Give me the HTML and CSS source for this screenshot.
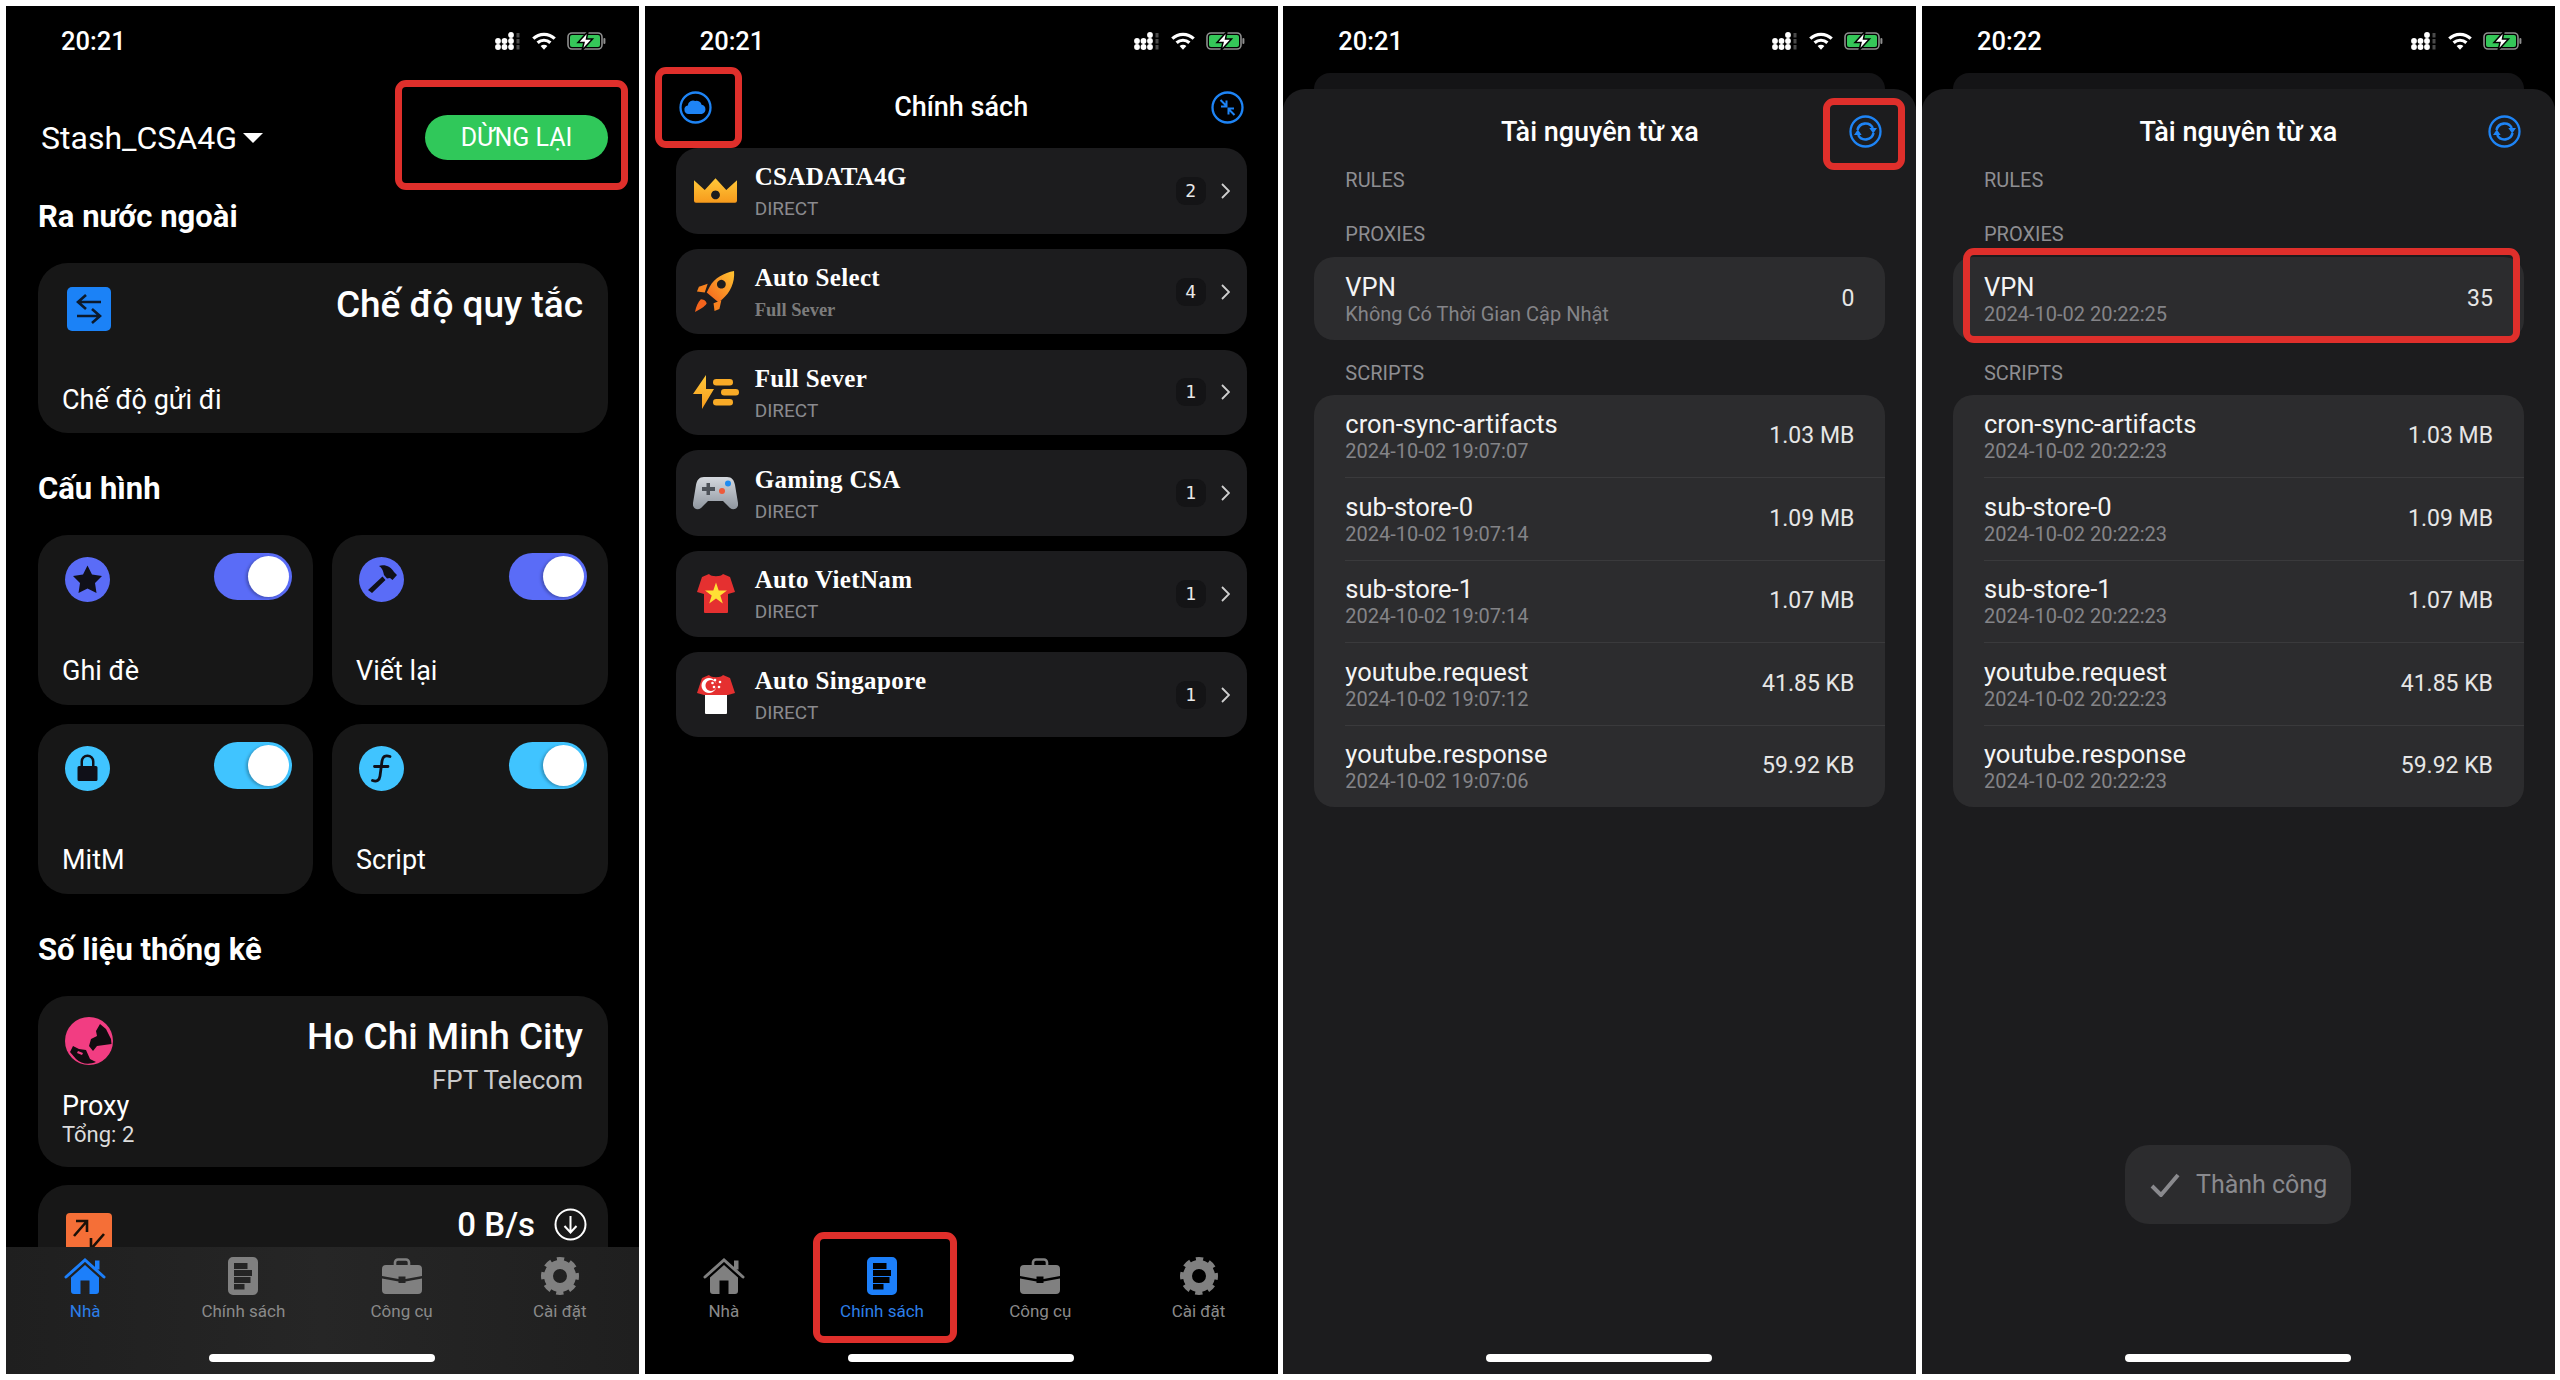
FILE: index.html
```html
<!DOCTYPE html>
<html lang="vi">
<head>
<meta charset="utf-8">
<title>Stash</title>
<link rel="stylesheet" href="styles.css">
</head>
<body>
<svg class="defs" width="0" height="0" aria-hidden="true">
  <defs>
    <linearGradient id="gold" x1="0" y1="0" x2="0" y2="1"><stop offset="0" stop-color="#ffc93a"/><stop offset="1" stop-color="#f79a1c"/></linearGradient>
    <linearGradient id="fire" x1="1" y1="0" x2="0" y2="1"><stop offset="0" stop-color="#ffc531"/><stop offset="1" stop-color="#f4601c"/></linearGradient>
    <linearGradient id="silver" x1="0" y1="0" x2="0" y2="1"><stop offset="0" stop-color="#d4d8de"/><stop offset="1" stop-color="#8f969f"/></linearGradient>
    <symbol id="i-signal" viewBox="0 0 25 18">
      <g fill="#fff"><circle cx="3" cy="9" r="2.900"/><circle cx="3" cy="15" r="2.900"/><circle cx="9.500" cy="9" r="2.900"/><circle cx="9.500" cy="15" r="2.900"/><circle cx="16" cy="3" r="2.900"/><circle cx="16" cy="9" r="2.900"/><circle cx="16" cy="15" r="2.900"/></g>
      <g fill="#4a4a4a"><rect x="21.500" y="1" width="3" height="4.500"/><rect x="21.500" y="7" width="3" height="4.500"/><rect x="21.500" y="13" width="3" height="4.500"/></g>
    </symbol>
    <symbol id="i-wifi" viewBox="0 0 24 18">
      <g fill="none" stroke="#fff" stroke-width="3.200"><path d="M1.300 6.600C7.300.9 16.700.9 22.700 6.600"/><path d="M5.600 10.800C9.300 7.400 14.700 7.400 18.400 10.800"/></g>
      <path fill="#fff" d="M8.600 14C10.500 12.400 13.500 12.400 15.400 14L12 17.800z"/>
    </symbol>
    <symbol id="i-battery" viewBox="0 0 39 18">
      <rect x="1" y="1" width="34" height="16" rx="4" fill="none" stroke="#8e8e8e" stroke-width="1.600"/>
      <rect x="3" y="3" width="30" height="12" rx="2" fill="#35c759"/>
      <rect x="36.400" y="6" width="2" height="6" rx="1" fill="#8e8e8e"/>
      <path d="M21 -0.500L11 10.500H17L15 18.500L25.500 7H19.500z" fill="#fff" stroke="#000" stroke-width="1.500"/>
    </symbol>
    <symbol id="i-home" viewBox="0 0 42 37">
      <path d="M2 19.500L21 2.500L40 19.500" fill="none" stroke="currentColor" stroke-width="3" stroke-linecap="round"/>
      <rect x="31" y="3" width="4.500" height="9" fill="currentColor"/>
      <path fill-rule="evenodd" fill="currentColor" d="M7 20L21 7.500L35 20V33.500a3 3 0 0 1-3 3H10a3 3 0 0 1-3-3zM16.500 23V36.500H25.500V23z"/>
    </symbol>
    <symbol id="i-policy" viewBox="0 0 30 38">
      <path fill-rule="evenodd" fill="currentColor" d="M5 0H25a5 5 0 0 1 5 5V33a5 5 0 0 1-5 5H5a5 5 0 0 1-5-5V5a5 5 0 0 1 5-5zM6 6V12H19.500V6zM6 13V19H24V13zM6 20V26H22.500V20zM6 27V32.500H16.500V27z"/>
    </symbol>
    <symbol id="i-tools" viewBox="0 0 40 36">
      <path fill="none" stroke="currentColor" stroke-width="2.600" d="M13 8V4.500a3 3 0 0 1 3-3H24a3 3 0 0 1 3 3V8"/>
      <path fill="currentColor" d="M4 7H36a4 4 0 0 1 4 4V18L23.500 21V18.500H16.500V21L0 18V11a4 4 0 0 1 4-4z"/>
      <path fill="currentColor" d="M0 20.500L16.500 23.500V25H23.500V23.500L40 20.500V32a4 4 0 0 1-4 4H4a4 4 0 0 1-4-4z"/>
    </symbol>
    <symbol id="i-gear" viewBox="0 0 38 38">
      <circle cx="19" cy="19" r="11.500" fill="none" stroke="currentColor" stroke-width="9"/>
      <circle cx="19" cy="19" r="16" fill="none" stroke="currentColor" stroke-width="6" stroke-dasharray="6.900 5.666" stroke-dashoffset="3.450"/>
    </symbol>
    <symbol id="i-cloud" viewBox="0 0 33 33">
      <circle cx="16.500" cy="16.500" r="15" fill="none" stroke="#1e84f5" stroke-width="2.300"/>
      <path fill="#1e84f5" d="M9.500 23a4.300 4.300 0 0 1-.7-8.500 5.300 5.300 0 0 1 7.500-4.500 5.100 5.100 0 0 1 6.300 3.800 4.700 4.700 0 0 1 .2 9.200z"/>
    </symbol>
    <symbol id="i-collapse" viewBox="0 0 33 33">
      <circle cx="16.500" cy="16.500" r="15" fill="none" stroke="#1e84f5" stroke-width="2.300"/>
      <g fill="none" stroke="#1e84f5" stroke-width="2"><path d="M9.500 9L15.500 15M15.500 9.500V15.500H10"/><path d="M23.500 24L17.500 18M17.500 23.500V17.500H23"/></g>
    </symbol>
    <symbol id="i-refresh" viewBox="0 0 33 33">
      <circle cx="16.500" cy="16.500" r="15" fill="none" stroke="#1e84f5" stroke-width="2.300"/>
      <g fill="none" stroke="#1e84f5" stroke-width="2.600"><path d="M8.500 15A8.200 8.200 0 0 1 23.800 13"/><path d="M24.500 18A8.200 8.200 0 0 1 9.200 20"/></g>
      <path fill="#1e84f5" d="M20.300 13H28L24.200 18.500zM5 20H12.700L8.800 14.500z"/>
    </symbol>
    <symbol id="i-crown" viewBox="0 0 44 25">
      <path fill="url(#gold)" fill-rule="evenodd" d="M0 2L11 12L22 0L33 12L44 2V23a2 2 0 0 1-2 2H2a2 2 0 0 1-2-2zM22 12.500a4.500 4.500 0 1 0 .01 0z"/>
    </symbol>
    <symbol id="i-rocket" viewBox="0 0 42 43">
      <path fill="url(#fire)" fill-rule="evenodd" d="M40 0C41 12 36 22 28 29L24 32L12 22L15 16C20 7 30 2 40 0zM27 9a4.500 4.500 0 1 0 .01 0z"/>
      <path fill="#f7821f" d="M13 13L4 16L2 21L10 22zM27 30L25 39L20 41L19 33z"/>
      <path fill="#f4641d" d="M6 29C8 29 11 30 12 33C10 37 5 39 0 42C1 37 3 32 6 29z"/>
    </symbol>
    <symbol id="i-bolt" viewBox="0 0 46 34">
      <path fill="url(#gold)" d="M13 0V14H21L9 34V19H0z"/>
      <g fill="#f9ab27"><rect x="20" y="4" width="20" height="6.500" rx="3.250"/><rect x="28" y="14" width="18" height="6.500" rx="3.250"/><rect x="20" y="24" width="20" height="6.500" rx="3.250"/></g>
    </symbol>
    <symbol id="i-pad" viewBox="0 0 45 33">
      <path fill="url(#silver)" d="M11 0H34C39 0 41 3 42 8L45 26C46 31 41 34 37 31L30 24H15L8 31C4 34 -1 31 0 26L3 8C4 3 6 0 11 0z"/>
      <path fill="#4c5158" d="M10 9H14.500V5H18V9H23V13H18V17H14.500V13H10z" transform="translate(-1 1)"/>
      <circle cx="35" cy="6.500" r="3" fill="#1f8bf0"/><circle cx="29" cy="14" r="3" fill="#ee5a3a"/>
    </symbol>
    <symbol id="i-vn" viewBox="0 0 38 39">
      <path fill="#e53030" d="M12 0C14 3 24 3 26 0L33 3L38 18L31 20V38a1 1 0 0 1-1 1H8a1 1 0 0 1-1-1V20L0 18L5 3z"/>
      <path fill="#ffdf35" d="M19 8.500L21.700 16.500H30L23.300 21.500L25.800 29.500L19 24.600L12.200 29.500L14.700 21.500L8 16.500H16.300z"/>
    </symbol>
    <symbol id="i-sg" viewBox="0 0 38 39">
      <path fill="#fff" d="M8 17H30V38a1 1 0 0 1-1 1H9a1 1 0 0 1-1-1z"/>
      <path fill="#e53030" d="M12 0C14 3 24 3 26 0L33 3L38 18L31 20H7L0 18L5 3z"/>
      <path fill="#fff" fill-rule="evenodd" d="M12 3a7.500 7.500 0 1 0 .01 0zM14 5a5.500 5.500 0 1 1-.01 0z"/>
      <g fill="#fff"><circle cx="18" cy="5" r="1.300"/><circle cx="23" cy="7" r="1.300"/><circle cx="22" cy="12" r="1.300"/><circle cx="17" cy="12" r="1.300"/><circle cx="15.500" cy="8" r="1.300"/></g>
    </symbol>
  </defs>
</svg>

<main class="screens">

  <section class="phone">
    <header class="status">
      <span class="time">20:21</span>
      <div class="status-icons">
        <svg class="s-signal"><use href="#i-signal"/></svg>
        <svg class="s-wifi"><use href="#i-wifi"/></svg>
        <svg class="s-battery"><use href="#i-battery"/></svg>
      </div>
    </header>
    <div class="home-body">
      <div class="home-head">
        <div class="profile"><span>Stash_CSA4G</span><i class="caret"></i></div>
        <button class="stop">DỪNG LẠI</button>
      </div>
      <h2 class="sec first">Ra nước ngoài</h2>
      <div class="card wide">
        <div class="card-top">
          <svg class="ico-mode" viewBox="0 0 44 44"><rect width="44" height="44" rx="5" fill="#1b82f7"/><g fill="none" stroke="#0c1a2c" stroke-width="2.600"><path d="M34 15H11M19 8L11 15L19 22"/><path d="M10 29H33M25 22L33 29L25 36"/></g></svg>
          <span class="big">Chế độ quy tắc</span>
        </div>
        <span class="label">Chế độ gửi đi</span>
      </div>
      <h2 class="sec">Cấu hình</h2>
      <div class="toggles">
        <div class="tcard">
          <div class="tc-top">
            <svg class="ico-round" viewBox="0 0 45 45"><circle cx="22.500" cy="22.500" r="22.500" fill="#5a6cf7"/><path fill="#101018" d="M22.500 8.500L27 17.500L37 19L30 26L31.500 36L22.500 31.500L13.500 36L15 26L8 19L18 17.500z"/></svg>
            <span class="switch"></span>
          </div>
          <span class="label">Ghi đè</span>
        </div>
        <div class="tcard">
          <div class="tc-top">
            <svg class="ico-round" viewBox="0 0 45 45"><circle cx="22.500" cy="22.500" r="22.500" fill="#5a6cf7"/><path fill="#101018" d="M20 9C26 7 32 10 35 15L38 18L33.500 23L31 21L28 21.500L25 18C24 13 23 11 20 9zM23.500 19.500L26.500 23L13 36L9 33z"/></svg>
            <span class="switch"></span>
          </div>
          <span class="label">Viết lại</span>
        </div>
        <div class="tcard">
          <div class="tc-top">
            <svg class="ico-round" viewBox="0 0 45 45"><circle cx="22.500" cy="22.500" r="22.500" fill="#40c4ff"/><path fill="#101018" fill-rule="evenodd" d="M22.500 8.500a7 7 0 0 1 7 7V20H31a1.500 1.500 0 0 1 1.500 1.500V33.500a1.500 1.500 0 0 1-1.500 1.500H14a1.500 1.500 0 0 1-1.500-1.500V21.500A1.500 1.500 0 0 1 14 20H15.500V15.500a7 7 0 0 1 7-7zM22.500 11a4.500 4.500 0 0 0-4.500 4.500V20H27V15.500a4.500 4.500 0 0 0-4.500-4.500z"/></svg>
            <span class="switch cyan"></span>
          </div>
          <span class="label">MitM</span>
        </div>
        <div class="tcard">
          <div class="tc-top">
            <svg class="ico-round" viewBox="0 0 45 45"><circle cx="22.500" cy="22.500" r="22.500" fill="#40c4ff"/><path fill="none" stroke="#101018" stroke-width="2.800" stroke-linecap="round" d="M31 10.500C26 8.500 23.500 11 23 15L21 30C20.500 34.500 17.500 36 13.500 34.500M15.500 20.500H29"/></svg>
            <span class="switch cyan"></span>
          </div>
          <span class="label">Script</span>
        </div>
      </div>
      <h2 class="sec">Số liệu thống kê</h2>
      <div class="card proxy">
        <div class="proxy-left">
          <svg class="ico-globe" viewBox="0 0 48 48"><circle cx="24" cy="24" r="24" fill="#f23d82"/><path fill="#120c10" d="M35 7L41 12L46 22L46.500 27L32 29L28 34L24 29L26 22L32 19L31 14z"/><path fill="#120c10" d="M8 29L14 32L21 33L25 42L31 45C24 48 16 47 11 42L5 35z"/><path fill="#f23d82" d="M13 34L18 36L17 38L12 36z"/></svg>
          <span class="label">Proxy</span>
          <span class="total">Tổng: 2</span>
        </div>
        <div class="proxy-right">
          <span class="big">Ho Chi Minh City</span>
          <span class="isp">FPT Telecom</span>
        </div>
      </div>
      <div class="card speed">
        <svg class="ico-speed" viewBox="0 0 46 44"><rect width="46" height="44" rx="4" fill="#f56f37"/><g fill="none" stroke="#1a1008" stroke-width="2.600"><path d="M8 23L21 8M10 8H21V19"/><path d="M38 21L25 36M36 36H25V25"/></g></svg>
        <div class="speed-val">
          <span class="rate">0 B/s</span>
          <svg class="ico-down" viewBox="0 0 33 33"><circle cx="16.500" cy="16.500" r="15" fill="none" stroke="#fff" stroke-width="2"/><path d="M16.500 8V24M10.500 18L16.500 24.500L22.500 18" fill="none" stroke="#fff" stroke-width="2"/></svg>
        </div>
      </div>
    </div>
    <nav class="tabbar grey">
      <div class="tab on"><svg class="t-home"><use href="#i-home"/></svg><span>Nhà</span></div>
      <div class="tab"><svg class="t-policy"><use href="#i-policy"/></svg><span>Chính sách</span></div>
      <div class="tab"><svg class="t-tools"><use href="#i-tools"/></svg><span>Công cụ</span></div>
      <div class="tab"><svg class="t-gear"><use href="#i-gear"/></svg><span>Cài đặt</span></div>
    </nav>
    <i class="indicator"></i>
    <i class="mark mark-stop"></i>
  </section>

  <section class="phone">
    <header class="status">
      <span class="time">20:21</span>
      <div class="status-icons">
        <svg class="s-signal"><use href="#i-signal"/></svg>
        <svg class="s-wifi"><use href="#i-wifi"/></svg>
        <svg class="s-battery"><use href="#i-battery"/></svg>
      </div>
    </header>
    <div class="navbar">
      <svg class="nav-ico"><use href="#i-cloud"/></svg>
      <h1>Chính sách</h1>
      <svg class="nav-ico"><use href="#i-collapse"/></svg>
    </div>
    <div class="policies">
      <div class="pol"><div class="pol-ico"><svg class="p-crown"><use href="#i-crown"/></svg></div><div class="pol-txt"><b>CSADATA4G</b><span>DIRECT</span></div><span class="count">2</span><svg class="chev" viewBox="0 0 9 16"><path d="M1 1L8 8L1 15"/></svg></div>
      <div class="pol"><div class="pol-ico"><svg class="p-rocket"><use href="#i-rocket"/></svg></div><div class="pol-txt"><b>Auto Select</b><span class="serif">Full Sever</span></div><span class="count">4</span><svg class="chev" viewBox="0 0 9 16"><path d="M1 1L8 8L1 15"/></svg></div>
      <div class="pol"><div class="pol-ico"><svg class="p-bolt"><use href="#i-bolt"/></svg></div><div class="pol-txt"><b>Full Sever</b><span>DIRECT</span></div><span class="count">1</span><svg class="chev" viewBox="0 0 9 16"><path d="M1 1L8 8L1 15"/></svg></div>
      <div class="pol"><div class="pol-ico"><svg class="p-pad"><use href="#i-pad"/></svg></div><div class="pol-txt"><b>Gaming CSA</b><span>DIRECT</span></div><span class="count">1</span><svg class="chev" viewBox="0 0 9 16"><path d="M1 1L8 8L1 15"/></svg></div>
      <div class="pol"><div class="pol-ico"><svg class="p-shirt"><use href="#i-vn"/></svg></div><div class="pol-txt"><b>Auto VietNam</b><span>DIRECT</span></div><span class="count">1</span><svg class="chev" viewBox="0 0 9 16"><path d="M1 1L8 8L1 15"/></svg></div>
      <div class="pol"><div class="pol-ico"><svg class="p-shirt"><use href="#i-sg"/></svg></div><div class="pol-txt"><b>Auto Singapore</b><span>DIRECT</span></div><span class="count">1</span><svg class="chev" viewBox="0 0 9 16"><path d="M1 1L8 8L1 15"/></svg></div>
    </div>
    <nav class="tabbar">
      <div class="tab"><svg class="t-home"><use href="#i-home"/></svg><span>Nhà</span></div>
      <div class="tab on"><svg class="t-policy"><use href="#i-policy"/></svg><span>Chính sách</span></div>
      <div class="tab"><svg class="t-tools"><use href="#i-tools"/></svg><span>Công cụ</span></div>
      <div class="tab"><svg class="t-gear"><use href="#i-gear"/></svg><span>Cài đặt</span></div>
    </nav>
    <i class="indicator"></i>
    <i class="mark mark-cloud"></i>
    <i class="mark mark-tab"></i>
  </section>

  <section class="phone">
    <header class="status">
      <span class="time">20:21</span>
      <div class="status-icons">
        <svg class="s-signal"><use href="#i-signal"/></svg>
        <svg class="s-wifi"><use href="#i-wifi"/></svg>
        <svg class="s-battery"><use href="#i-battery"/></svg>
      </div>
    </header>
    <div class="peek"></div>
    <div class="sheet">
      <div class="sheet-head"><h1>Tài nguyên từ xa</h1><svg class="nav-ico"><use href="#i-refresh"/></svg></div>
      <div class="cap rules">RULES</div>
      <div class="cap">PROXIES</div>
      <div class="group">
        <div class="row"><div class="row-txt"><span class="name">VPN</span><span class="when">Không Có Thời Gian Cập Nhật</span></div><span class="val">0</span></div>
      </div>
      <div class="cap scripts">SCRIPTS</div>
      <div class="group">
        <div class="row"><div class="row-txt"><span class="name">cron-sync-artifacts</span><span class="when">2024-10-02 19:07:07</span></div><span class="val">1.03 MB</span></div>
        <div class="row"><div class="row-txt"><span class="name">sub-store-0</span><span class="when">2024-10-02 19:07:14</span></div><span class="val">1.09 MB</span></div>
        <div class="row"><div class="row-txt"><span class="name">sub-store-1</span><span class="when">2024-10-02 19:07:14</span></div><span class="val">1.07 MB</span></div>
        <div class="row"><div class="row-txt"><span class="name">youtube.request</span><span class="when">2024-10-02 19:07:12</span></div><span class="val">41.85 KB</span></div>
        <div class="row"><div class="row-txt"><span class="name">youtube.response</span><span class="when">2024-10-02 19:07:06</span></div><span class="val">59.92 KB</span></div>
      </div>
    </div>
    <i class="indicator"></i>
    <i class="mark mark-refresh"></i>
  </section>

  <section class="phone">
    <header class="status">
      <span class="time">20:22</span>
      <div class="status-icons">
        <svg class="s-signal"><use href="#i-signal"/></svg>
        <svg class="s-wifi"><use href="#i-wifi"/></svg>
        <svg class="s-battery"><use href="#i-battery"/></svg>
      </div>
    </header>
    <div class="peek"></div>
    <div class="sheet">
      <div class="sheet-head"><h1>Tài nguyên từ xa</h1><svg class="nav-ico"><use href="#i-refresh"/></svg></div>
      <div class="cap rules">RULES</div>
      <div class="cap">PROXIES</div>
      <div class="group">
        <div class="row"><div class="row-txt"><span class="name">VPN</span><span class="when">2024-10-02 20:22:25</span></div><span class="val">35</span></div>
      </div>
      <div class="cap scripts">SCRIPTS</div>
      <div class="group">
        <div class="row"><div class="row-txt"><span class="name">cron-sync-artifacts</span><span class="when">2024-10-02 20:22:23</span></div><span class="val">1.03 MB</span></div>
        <div class="row"><div class="row-txt"><span class="name">sub-store-0</span><span class="when">2024-10-02 20:22:23</span></div><span class="val">1.09 MB</span></div>
        <div class="row"><div class="row-txt"><span class="name">sub-store-1</span><span class="when">2024-10-02 20:22:23</span></div><span class="val">1.07 MB</span></div>
        <div class="row"><div class="row-txt"><span class="name">youtube.request</span><span class="when">2024-10-02 20:22:23</span></div><span class="val">41.85 KB</span></div>
        <div class="row"><div class="row-txt"><span class="name">youtube.response</span><span class="when">2024-10-02 20:22:23</span></div><span class="val">59.92 KB</span></div>
      </div>
    </div>
    <div class="toast">
      <svg class="toast-check" viewBox="0 0 30 24"><path d="M2 13L11 22L28 2" fill="none" stroke="#8a8a8e" stroke-width="4"/></svg>
      <span>Thành công</span>
    </div>
    <i class="indicator"></i>
    <i class="mark mark-vpn"></i>
  </section>

</main>
</body>
</html>
```
FILE: styles.css
```css
* { box-sizing: border-box; }
html, body { margin: 0; padding: 0; background: #fff; }
body { width: 2560px; height: 1380px; overflow: hidden; font-family: Roboto, "Noto Sans", sans-serif; color: #fff; }
.defs { position: absolute; }
svg { display: block; }
h1, h2 { margin: 0; }

.screens { display: flex; gap: 5.67px; padding: 6px 5px 6px 6px; height: 1380px; }
.phone { position: relative; flex: none; width: 633px; height: 1368px; background: #000; overflow: hidden; display: flex; flex-direction: column; }

/* status bar */
.status { flex: none; height: 70px; padding: 0 33px 0 55px; display: flex; align-items: center; justify-content: space-between; }
.time { font-size: 25.5px; font-weight: 500; }
.status-icons { display: flex; align-items: center; gap: 12px; }
.s-signal { width: 25px; height: 18px; }
.s-wifi { width: 24px; height: 18px; }
.s-battery { width: 39px; height: 18px; margin-left: -1px; }

/* home */
.home-body { flex: 1; min-height: 0; padding: 0 31px 0 32px; overflow: hidden; }
.home-head { display: flex; justify-content: space-between; align-items: center; height: 45px; margin-top: 39px; }
.profile { display: flex; align-items: center; gap: 6px; font-size: 32px; padding-left: 3px; }
.caret { width: 0; height: 0; border-left: 10px solid transparent; border-right: 10px solid transparent; border-top: 10px solid #fff; }
.stop { width: 183px; height: 45px; border: 0; border-radius: 23px; background: #30c85a; color: #fff; font: 400 25px Roboto, sans-serif; padding: 0; }
.sec { height: 36px; line-height: 36px; font-size: 31px; font-weight: 700; margin: 38px 0 28px; }
.sec.first { margin-top: 39px; }
.card { background: #171717; border-radius: 30px; }
.wide { height: 170px; padding: 24px 25px 20px 24px; display: flex; flex-direction: column; justify-content: space-between; }
.card-top { display: flex; justify-content: space-between; align-items: flex-start; padding-left: 5px; }
.ico-mode { width: 44px; height: 44px; }
.big { font-size: 37px; font-weight: 500; line-height: 36px; }
.label { font-size: 27px; line-height: 26px; }
.toggles { display: grid; grid-template-columns: 275px 276px; column-gap: 19px; row-gap: 19px; }
.tcard { height: 170px; background: #171717; border-radius: 30px; padding: 18px 21px 21px 24px; display: flex; flex-direction: column; justify-content: space-between; }
.tc-top { display: flex; justify-content: space-between; align-items: flex-start; padding-left: 3px; }
.ico-round { width: 45px; height: 45px; margin-top: 4px; }
.switch { position: relative; width: 78px; height: 47px; border-radius: 24px; background: #5a6cf7; }
.switch.cyan { background: #40c4ff; }
.switch::after { content: ""; position: absolute; right: 3px; top: 3px; width: 41px; height: 41px; border-radius: 50%; background: #fff; box-shadow: -2px 1px 3px rgba(0, 0, 0, .25); }
.proxy { height: 171px; padding: 21px 25px 20px 24px; display: flex; justify-content: space-between; }
.proxy-left { display: flex; flex-direction: column; }
.ico-globe { width: 48px; height: 48px; margin: 0 0 auto 3px; }
.proxy-left .label { line-height: 34px; }
.total { font-size: 22px; line-height: 24px; color: #dcdcdc; }
.proxy-right { display: flex; flex-direction: column; align-items: flex-end; gap: 11px; margin-top: 2px; }
.isp { font-size: 26px; line-height: 28px; color: #c9c9c9; }
.speed { height: 190px; margin-top: 18px; padding: 20px 21px 0 28px; display: flex; justify-content: space-between; align-items: flex-start; }
.ico-speed { width: 46px; height: 44px; margin-top: 8px; }
.speed-val { display: flex; align-items: center; gap: 19px; }
.rate { font-size: 33px; font-weight: 500; }
.ico-down { width: 33px; height: 33px; }

/* tab bar */
.tabbar { flex: none; height: 127px; padding-top: 10px; display: grid; grid-template-columns: repeat(4, 1fr); align-items: start; background: #000; }
.tabbar.grey { background: linear-gradient(90deg, #1f1f1f, #262626 50%, #1f1f1f); }
.tab { display: flex; flex-direction: column; align-items: center; height: 64px; color: #808080; }
.tab > svg { flex: none; height: 38px; }
.tab span { margin-top: auto; font-size: 17px; line-height: 20px; color: #8a8a8a; }
.tab.on { color: #1c7ffa; }
.tab.on span { color: #2c7fe8; }
.t-home { width: 42px; }
.t-policy { width: 30px; }
.t-tools { width: 40px; }
.t-gear { width: 38px; }
.indicator { position: absolute; left: 203px; top: 1348px; width: 226px; height: 8px; border-radius: 4px; background: #fff; }

/* policies */
.navbar { flex: none; height: 62px; padding: 0 34px; display: flex; align-items: center; justify-content: space-between; }
.navbar h1, .sheet-head h1 { font-size: 27px; font-weight: 500; }
.nav-ico { width: 33px; height: 33px; flex: none; }
.policies { flex: 1; min-height: 0; margin-top: 10px; padding: 0 31px; display: flex; flex-direction: column; gap: 15.3px; }
.pol { flex: none; height: 85.5px; background: #1c1c1e; border-radius: 22px; padding: 0 17px 0 18px; display: flex; align-items: center; }
.pol-ico { width: 44px; height: 44px; margin-right: 17px; display: flex; align-items: center; justify-content: center; }
.p-crown { flex: none; width: 43px; height: 25px; }
.p-rocket { flex: none; width: 41px; height: 42px; }
.p-bolt { flex: none; width: 46px; height: 34px; }
.p-pad { flex: none; width: 45px; height: 33px; }
.p-shirt { flex: none; width: 38px; height: 39px; }
.pol-txt { flex: 1; display: flex; flex-direction: column; gap: 5px; padding-top: 2px; }
.pol-txt b { font: 700 25px/30px "Liberation Serif", serif; letter-spacing: .35px; }
.pol-txt span { font-size: 19px; line-height: 24px; color: #8a8a8e; }
.pol-txt .serif { font: 700 18.5px/24px "Liberation Serif", serif; color: #7c7c7c; }
.count { width: 30px; height: 28px; border-radius: 9px; background: #141416; font: 400 18px/28px "DejaVu Sans Mono", monospace; text-align: center; color: #e8e8e8; margin-right: 15px; }
.chev { width: 9px; height: 16px; }
.chev path { fill: none; stroke: #cfcfcf; stroke-width: 1.8; }

/* remote resources sheet */
.peek { flex: none; height: 16px; margin: -3px 31px 0; border-radius: 20px 20px 0 0; background: #141416; }
.sheet { flex: 1; min-height: 0; background: #1c1c1e; border-radius: 22px 22px 0 0; padding: 0 31px; }
.sheet-head { height: 78px; padding-top: 8px; display: flex; align-items: center; justify-content: center; position: relative; }
.sheet-head .nav-ico { position: absolute; right: 3px; top: 26px; }
.cap { height: 26px; line-height: 26px; font-size: 20px; color: #8e8e92; padding-left: 31px; margin-bottom: 10px; }
.cap.rules { margin-bottom: 28px; }
.cap.scripts { margin-top: 20px; margin-bottom: 9px; }
.group { background: #2c2c2e; border-radius: 20px; overflow: hidden; }
.row { position: relative; height: 82.5px; padding: 0 31px; display: flex; align-items: center; justify-content: space-between; }
.row + .row::before { content: ""; position: absolute; left: 31px; right: 0; top: 0; height: 1px; background: #3a3a3c; }
.row-txt { display: flex; flex-direction: column; padding-top: 1px; }
.name { font-size: 25.5px; line-height: 30px; color: #f4f4f4; }
.when { font-size: 20px; line-height: 24px; color: #848488; }
.val { font-size: 23px; color: #e6e6e6; }
.toast { position: absolute; left: 203px; top: 1139px; width: 226px; height: 79px; border-radius: 24px; background: #2c2c2e; display: flex; align-items: center; gap: 16px; padding-left: 25px; color: #8a8a8e; font-size: 25px; }
.toast-check { width: 30px; height: 24px; flex: none; }

/* red annotation frames */
.mark { position: absolute; border: 7px solid #df2f2b; border-radius: 11px; }
.mark-stop { left: 389px; top: 74px; width: 233px; height: 110px; }
.mark-cloud { left: 10px; top: 61px; width: 87px; height: 81px; }
.mark-tab { left: 168px; top: 1226px; width: 144px; height: 111px; }
.mark-refresh { left: 540px; top: 92px; width: 82px; height: 72px; }
.mark-vpn { left: 41px; top: 242px; width: 557px; height: 95px; }
```
